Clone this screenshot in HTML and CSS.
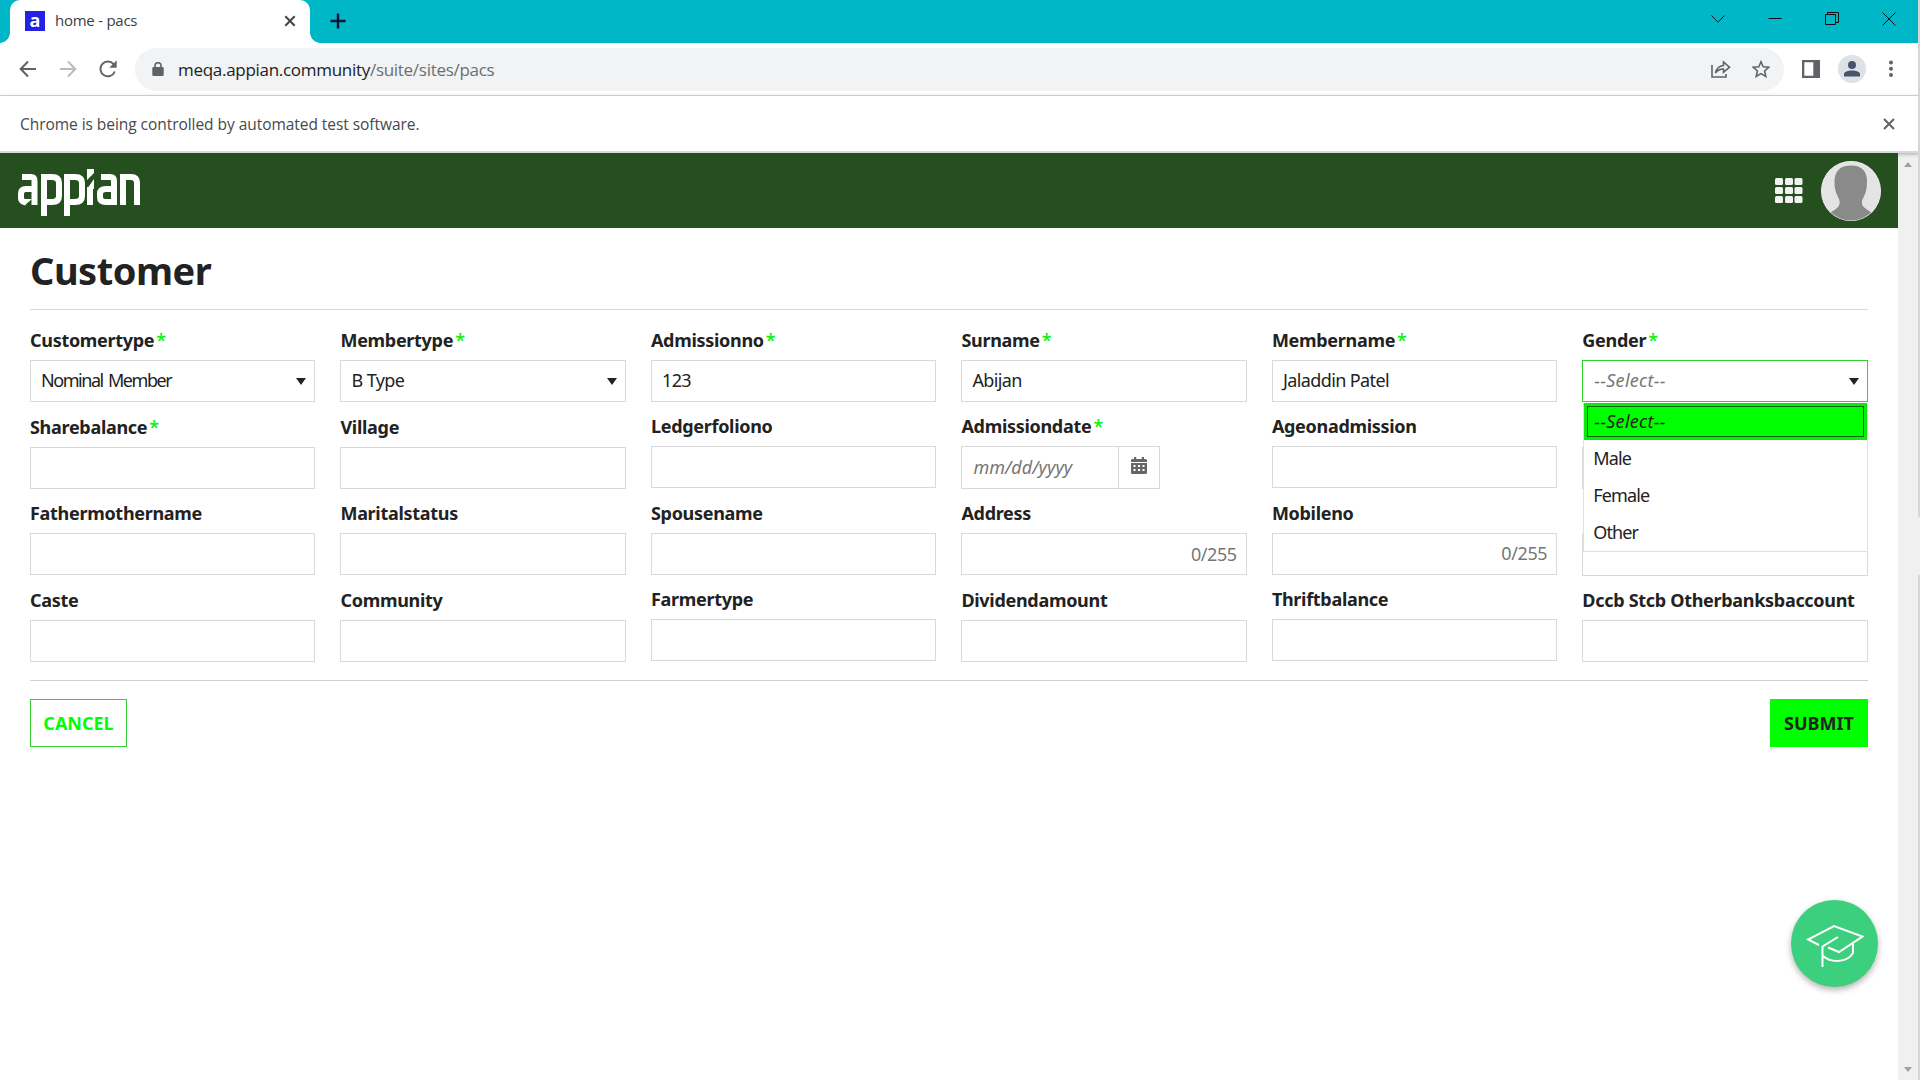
FILE: index.html
```html
<!DOCTYPE html>
<html lang="en">

<head>
    <meta charset="UTF-8">
    <meta name="viewport" content="width=device-width, initial-scale=1.0">
    <title>home - pacs</title>
    <link rel="stylesheet" href="styles.css">
</head>

<body>
    <div class="browser">
        <!-- tab strip -->
        <div class="tab-strip">
            <div class="tab">
                <span class="favicon">a</span>
                <span class="tab-title">home - pacs</span>
                <svg class="tab-close" width="12" height="12" viewBox="0 0 12 12"><path d="M1.3 1.3l9.4 9.4M10.7 1.3l-9.4 9.4" /></svg>
            </div>
            <svg class="new-tab" width="16" height="16" viewBox="0 0 16 16"><path d="M8 .5v15M.5 8h15" /></svg>
            <div class="win-btns">
                <svg width="14" height="14" viewBox="0 0 14 14"><path d="M.5 3.5L7 10.2l6.500-6.700" /></svg>
                <svg width="14" height="14" viewBox="0 0 14 14"><path d="M.5 6.500h13" /></svg>
                <svg width="14" height="14" viewBox="0 0 14 14"><path d="M.5 2.500h10v10h-10zM2.500 2.500v-2h11v10h-3" /></svg>
                <svg width="14" height="14" viewBox="0 0 14 14"><path d="M.5 .5l13 13M13.500 .5l-13 13" /></svg>
            </div>
        </div>

        <!-- address bar -->
        <div class="toolbar">
            <div class="nav-btns">
                <svg width="18" height="18" viewBox="0 0 18 18"><path d="M17 9H2M9 1.500L1.700 9 9 16.500" /></svg>
                <svg class="off" width="18" height="18" viewBox="0 0 18 18"><path d="M1 9h15M9 1.500L16.300 9 9 16.500" /></svg>
                <svg width="18" height="18" viewBox="0 0 18 18"><path d="M15.800 11.500A7.400 7.400 0 1 1 14.600 4.200" /><path class="fill" d="M17.700 .3v7.400h-7.400z" /></svg>
            </div>
            <div class="omnibox">
                <svg class="lock" width="12" height="14" viewBox="0 0 12 14"><rect x=".3" y="5" width="11.400" height="9" rx="1.200" /><path d="M3 6V3.600a3 3 0 0 1 6 0V6" /></svg>
                <span class="url">meqa.appian.community<i>/suite/sites/pacs</i></span>
                <svg class="share" width="20" height="18" viewBox="0 0 20 18"><path d="M1 5v12h14v-3M4.500 13C5.500 8 8 6 12.500 5.500V2L18.500 7.200 12.500 12.300V9C9 9 6.500 10 4.500 13z" /></svg>
                <svg class="star" width="18" height="18" viewBox="0 0 18 18"><path d="M9 1.800l2.200 5 5.500.5-4.100 3.700 1.200 5.400L9 13.600l-4.800 2.800 1.200-5.400L1.300 7.300l5.500-.5z" /></svg>
            </div>
            <div class="tools">
                <svg width="18" height="18" viewBox="0 0 18 18"><path d="M0 0h18v18H0zM2.300 2.300v13.400h9V2.300z" fill="#5f6368" fill-rule="evenodd" /></svg>
                <svg width="28" height="28" viewBox="0 0 28 28"><circle cx="14" cy="14" r="14" fill="#dfe1e7" /><circle cx="14" cy="10" r="4" fill="#46546b" /><path d="M6 21.500v-2.200c0-5 16-5 16 0v2.200z" fill="#46546b" /></svg>
                <svg width="4" height="18" viewBox="0 0 4 18"><circle cx="2" cy="2.500" r="2" /><circle cx="2" cy="8.700" r="2" /><circle cx="2" cy="15" r="2" /></svg>
            </div>
        </div>

        <div class="infobar">
            <span>Chrome is being controlled by automated test software.</span>
            <svg width="12" height="12" viewBox="0 0 12 12"><path d="M1 1l10 10M11 1L1 11" /></svg>
        </div>

        <div class="viewport">
            <div class="page">
                <div class="site-header">
                    <svg class="logo" width="124" height="48" viewBox="0 0 124 48">
                        <g fill="none" stroke="#fff" stroke-width="6">
                            <path d="M4 8h9q3.500 0 3.500 4V36M16.500 20H8q-5 0-5 4.500V29q0 3.500 5 4.500" />
                            <path d="M26 47V8h8q7 0 7 6v13q0 6-7 6h-6" />
                            <path d="M49 47V8h8q7 0 7 6v13q0 6-7 6h-6" />
                            <path d="M72 36V18" />
                            <path d="M83 8h9q4 0 4 4V36M96 20h-8q-6 0-6 5v3q0 5 6 5h8" />
                            <path d="M105 36V8h8q6 0 6 6v22" />
                        </g>
                        <path class="solid" d="M69 0h7v4l-7 7zM69 20l7-10v10zM7 30l7 0-7 6z" />
                    </svg>
                    <svg class="apps" width="28" height="26" viewBox="0 0 28 26">
                        <g id="r"><rect width="8" height="7" rx="1.500" /><rect x="10" width="8" height="7" rx="1.500" /><rect x="19.500" width="8" height="7" rx="1.500" /></g>
                        <use href="#r" y="9" /><use href="#r" y="18" />
                    </svg>
                    <svg class="avatar" width="60" height="60" viewBox="0 0 60 60">
                        <clipPath id="round"><circle cx="30" cy="30" r="29.500" /></clipPath>
                        <circle cx="30" cy="30" r="30" fill="#f4f4f4" />
                        <g clip-path="url(#round)">
                            <rect width="60" height="60" fill="#e4e4e4" />
                            <path d="M30 4.500c11 0 16.500 6 16 17-.2 9-2 12-4.500 17-2 6 1 8 9 13V60H10v-9c8-4 10-8 8-13-2.500-5-4.500-9-4.500-17 0-11 5.500-16.500 16.500-16.500z" fill="#8a8a8a" />
                        </g>
                    </svg>
                </div>

                <div class="form">
                    <h1>Customer</h1>
                    <div class="columns">
                        <div class="col">
                            <div class="field"><label>Customertype<b>*</b></label><div class="input narrow">Nominal Member<span class="caret"></span></div></div>
                            <div class="field"><label>Sharebalance<b>*</b></label><div class="input"></div></div>
                            <div class="field"><label>Fathermothername</label><div class="input"></div></div>
                            <div class="field"><label>Caste</label><div class="input"></div></div>
                        </div>
                        <div class="col">
                            <div class="field"><label>Membertype<b>*</b></label><div class="input">B Type<span class="caret"></span></div></div>
                            <div class="field"><label>Village</label><div class="input"></div></div>
                            <div class="field"><label>Maritalstatus</label><div class="input"></div></div>
                            <div class="field"><label>Community</label><div class="input"></div></div>
                        </div>
                        <div class="col tight">
                            <div class="field"><label>Admissionno<b>*</b></label><div class="input">123</div></div>
                            <div class="field"><label>Ledgerfoliono</label><div class="input"></div></div>
                            <div class="field"><label>Spousename</label><div class="input"></div></div>
                            <div class="field"><label>Farmertype</label><div class="input"></div></div>
                        </div>
                        <div class="col tight">
                            <div class="field"><label>Surname<b>*</b></label><div class="input">Abijan</div></div>
                            <div class="field date-field"><label>Admissiondate<b>*</b></label>
                                <div class="input date">
                                    <em>mm/dd/yyyy</em>
                                    <span class="cal"><svg width="16" height="17" viewBox="0 0 16 17"><path fill-rule="evenodd" d="M3 0h2.200v2h5.600V0H13v2h1.500Q16 2 16 3.500V5H0V3.500Q0 2 1.500 2H3zM0 6h16v9.500q0 1.500-1.500 1.500h-13Q0 17 0 15.500zM2.500 8v2h2V8zM7 8v2h2V8zM11.500 8v2h2V8zM2.500 12v2h2v-2zM7 12v2h2v-2zM11.500 12v2h2v-2z" /></svg></span>
                                </div>
                            </div>
                            <div class="field"><label>Address</label><div class="input"><span class="count low">0/255</span></div></div>
                            <div class="field"><label>Dividendamount</label><div class="input"></div></div>
                        </div>
                        <div class="col tight">
                            <div class="field"><label>Membername<b>*</b></label><div class="input">Jaladdin Patel</div></div>
                            <div class="field"><label>Ageonadmission</label><div class="input"></div></div>
                            <div class="field"><label>Mobileno</label><div class="input"><span class="count">0/255</span></div></div>
                            <div class="field"><label>Thriftbalance</label><div class="input"></div></div>
                        </div>
                        <div class="col loose">
                            <div class="field"><label>Gender<b>*</b></label>
                                <div class="input open"><em>--Select--</em><span class="caret"></span>
                                    <ul class="menu">
                                        <li class="selected">--Select--</li>
                                        <li>Male</li>
                                        <li>Female</li>
                                        <li>Other</li>
                                    </ul>
                                </div>
                            </div>
                            <!-- these two labels are hidden behind the open menu -->
                            <div class="field"><label></label><div class="input"></div></div>
                            <div class="field"><label></label><div class="input"></div></div>
                            <div class="field"><label>Dccb Stcb Otherbanksbaccount</label><div class="input"></div></div>
                        </div>
                    </div>
                    <div class="buttons">
                        <button class="btn cancel">CANCEL</button>
                        <button class="btn submit">SUBMIT</button>
                    </div>
                </div>

                <!-- guide button floats over the page -->
                <div class="guide">
                    <svg width="58" height="44" viewBox="0 0 58 44"><path d="M13 21L2 15.500 28 2 56.500 12.500 33 28 22 23.500M32 13L16.500 22.500V43M17 32c8 7 24 7 30-3v-9" /></svg>
                </div>
            </div>
            <div class="scrollbar">
                <span class="up"></span>
                <span class="down"></span>
            </div>
        </div>
        <div class="edge"></div>
    </div>
</body>

</html>
```
FILE: styles.css
```css
* {
    box-sizing: border-box;
}

body {
    margin: 0;
    background: #fff;
    font-family: "Noto Sans", "Open Sans", sans-serif;
    color: #222;
}

svg {
    display: block;
    flex: none;
}

.browser {
    position: relative;
    display: flex;
    flex-direction: column;
    width: 1920px;
    height: 1080px;
    overflow: hidden;
}

/* tab strip */
.tab-strip {
    display: flex;
    height: 43px;
    padding-left: 10px;
    background: #00b7c7;
}

.tab {
    position: relative;
    display: flex;
    align-items: center;
    width: 300px;
    padding: 0 14px 1px 15px;
    border-radius: 10px 10px 0 0;
    background: #fff;
}

.tab::before,
.tab::after {
    content: "";
    position: absolute;
    bottom: 0;
    width: 10px;
    height: 10px;
    background: radial-gradient(circle at 0 0, transparent 9.5px, #fff 10px);
}

.tab::before {
    left: -10px;
}

.tab::after {
    right: -10px;
    transform: scaleX(-1);
}

.favicon {
    width: 20px;
    height: 20px;
    background: #2322e6;
    color: #fff;
    font: bold 18px/18px "Open Sans", sans-serif;
    text-align: center;
}

.tab-title {
    flex: 1;
    margin-left: 10px;
    padding-bottom: 2px;
    font: 15px "Open Sans", sans-serif;
    letter-spacing: -0.25px;
    color: #3c4043;
}

.tab-close,
.infobar svg {
    stroke: #444;
    stroke-width: 2;
}

.new-tab {
    margin: 13px 0 0 20px;
    stroke: #113;
    stroke-width: 2.4;
}

.win-btns {
    display: flex;
    gap: 43px;
    margin: 12px 24px 0 auto;
    fill: none;
    stroke: #111;
}

/* toolbar */
.toolbar {
    display: flex;
    align-items: center;
    height: 53px;
    padding: 0 26px 0 19px;
    border-bottom: 1px solid #dadce0;
}

.nav-btns {
    display: flex;
    gap: 22px;
    fill: none;
    stroke: #5f6368;
    stroke-width: 2;
}

.nav-btns .off {
    stroke: #bbb;
}

.nav-btns .fill {
    fill: #5f6368;
    stroke: none;
}

.omnibox {
    display: flex;
    align-items: center;
    width: 1649px;
    height: 43px;
    margin-left: 18px;
    padding: 0 14px 0 17px;
    border-radius: 22px;
    background: #f1f3f4;
}

.lock {
    fill: #5f6368;
}

.lock path,
.share,
.star {
    fill: none;
    stroke: #5f6368;
    stroke-width: 1.6;
}

.url {
    flex: 1;
    margin-left: 14px;
    font: 17px "Open Sans", sans-serif;
    letter-spacing: -0.29px;
    color: #202124;
}

.url i {
    font-style: normal;
    color: #6a6e73;
}

.star {
    margin-left: 21px;
}

.tools {
    display: flex;
    align-items: center;
    gap: 18px;
    margin-left: 18px;
    fill: #5f6368;
}

.tools svg:last-child {
    margin-left: 5px;
}

.infobar {
    position: relative;
    display: flex;
    align-items: center;
    justify-content: space-between;
    height: 57px;
    padding: 0 25px 0 20px;
    border-bottom: 2px solid #d8dadd;
    box-shadow: 0 1px 4px rgba(0, 0, 0, 0.3);
    font: 15.5px "Open Sans", sans-serif;
    letter-spacing: -0.05px;
    color: #47494c;
}

.infobar svg {
    stroke: #5f6368;
}

.viewport {
    display: flex;
    flex: 1;
}

.page {
    position: relative;
    width: 1898px;
}

.site-header {
    display: flex;
    align-items: center;
    height: 75px;
    padding: 0 17px 0 18px;
    background: #254f1f;
}

.logo {
    margin-top: 5px;
}

.logo .solid {
    fill: #fff;
}

.apps {
    margin-left: auto;
    fill: #f2f2f2;
}

.avatar {
    margin-left: 18px;
}

/* form */
.form {
    padding: 0 30px;
}

h1 {
    height: 82px;
    margin: 0 0 13px;
    padding-top: 15px;
    border-bottom: 1px solid #d9d9d9;
    font-size: 38px;
    line-height: 54px;
    letter-spacing: -0.5px;
}

.columns {
    display: flex;
    gap: 25.1px;
    height: 358px;
    padding-right: 0.3px;
    border-bottom: 1px solid #d0d0d0;
}

.col {
    flex: 1 1 0;
    min-width: 0;
}

.field {
    height: 86.6px;
    padding-top: 4.1px;
}

.tight .field {
    height: 86.3px;
}

.tight .date-field {
    height: 87px;
}

.loose .field {
    height: 86.75px;
}

label {
    display: block;
    height: 33px;
    padding-top: 1px;
    font-size: 18px;
    font-weight: bold;
    line-height: 24px;
    letter-spacing: -0.3px;
    white-space: nowrap;
}

label b {
    margin-left: 2px;
    color: #19f019;
    font-weight: 600;
}

.input {
    position: relative;
    display: flex;
    align-items: center;
    height: 42px;
    padding: 0 10px 2px;
    border: 1px solid #d9d9d9;
    font-size: 18px;
    letter-spacing: -0.6px;
}

.narrow {
    letter-spacing: -1.45px;
    word-spacing: 2px;
}

.input em {
    color: #767676;
    letter-spacing: 0;
}

.caret {
    margin: 3px -2px 0 auto;
    border: 5.5px solid transparent;
    border-top: 7px solid #222;
    border-bottom: 0;
}

.count {
    margin-left: auto;
    margin-right: -1px;
    color: #767676;
    letter-spacing: -0.4px;
}

.low {
    padding-top: 2px;
}

.date {
    width: 198.6px;
    height: 42.7px;
    padding-left: 11px;
    padding-right: 0;
    padding-bottom: 0;
}

.date em {
    padding-bottom: 1px;
}

.cal {
    display: flex;
    align-items: center;
    justify-content: center;
    width: 41px;
    height: 100%;
    margin-left: auto;
    padding-bottom: 5px;
    border-left: 1px solid #d9d9d9;
    fill: #666;
}

.open {
    padding-left: 11px;
    border-color: #2bd42b;
}

.open em,
.menu .selected {
    letter-spacing: 0.3px;
}

.menu {
    position: absolute;
    z-index: 2;
    top: 42px;
    left: 0;
    width: 285px;
    height: 149px;
    margin: 0;
    padding: 0;
    border: 1px solid #e0e0e0;
    border-top: 0;
    background: #fff;
    list-style: none;
}

.menu li {
    height: 37px;
    padding-left: 9px;
    line-height: 37px;
    letter-spacing: -0.9px;
}

.menu .selected {
    padding-left: 7px;
    border: 3px solid #0fe80f;
    outline: 1px solid #076607;
    outline-offset: -4px;
    background: #0f0;
    font-style: italic;
    line-height: 30px;
}

.buttons {
    display: flex;
    justify-content: space-between;
    padding-top: 18px;
}

.btn {
    height: 48px;
    padding: 0;
    border: 1px solid #0f0;
    background: #0f0;
    color: #222;
    font: bold 18px "Noto Sans", sans-serif;
}

.cancel {
    width: 97px;
    border-color: #36cc36;
    background: #fff;
    color: #0f0;
}

.submit {
    width: 98px;
}

.guide {
    position: absolute;
    right: 20px;
    bottom: 93px;
    display: flex;
    align-items: center;
    justify-content: center;
    width: 87px;
    height: 87px;
    border-radius: 50%;
    background: #3ccf7e;
    box-shadow: 0 3px 6px rgba(0, 0, 0, 0.3);
    fill: none;
    stroke: #fff;
    stroke-width: 2;
}

.guide svg {
    margin-top: 4px;
}

.scrollbar {
    display: flex;
    flex-direction: column;
    justify-content: space-between;
    align-items: center;
    width: 22px;
    padding: 9px 2px 8px 0;
    background: #f0f0f0;
}

.scrollbar span {
    border: 4.5px solid transparent;
}

.scrollbar .up {
    border-top: 0;
    border-bottom: 5px solid #a0a0a0;
}

.scrollbar .down {
    border-bottom: 0;
    border-top: 5px solid #a0a0a0;
}

/* sliver of the window behind, over the right border */
.edge {
    position: absolute;
    top: 0;
    right: 0;
    width: 2px;
    height: 1080px;
    background: linear-gradient(#d6d6d6 517px, #f0f0f0 517px, #f0f0f0 575px, #d6d6d6 575px);
}
```
